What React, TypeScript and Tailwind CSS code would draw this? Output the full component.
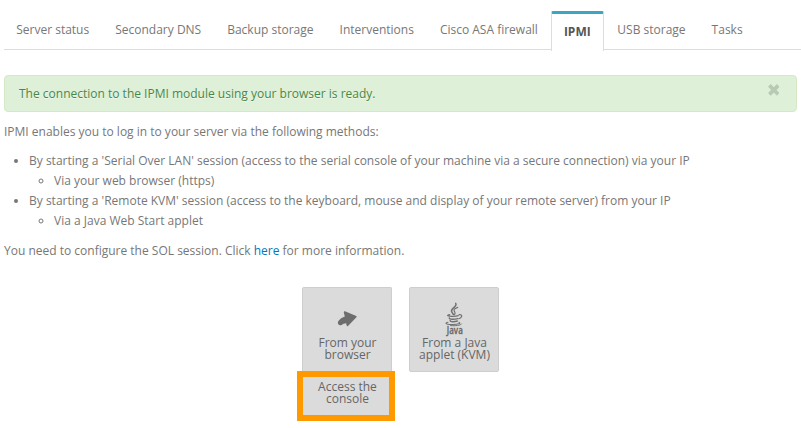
import React from "react";

const tabs = [
  "Server status",
  "Secondary DNS",
  "Backup storage",
  "Interventions",
  "Cisco ASA firewall",
  "IPMI",
  "USB storage",
  "Tasks",
];

function Tabs() {
  return (
    <nav className="flex h-[39px] items-end border-b border-[#dddddd]">
      {tabs.map((tab, index) =>
        tab === "IPMI" ? (
          <a
            key={tab}
            className="-mb-[2px] h-[40px] rounded-t-[2px] border-x border-t-[3px] border-x-[#dddddd] border-t-[#39a7c1] bg-white pl-3 pr-[12.7px] pt-[8px] font-bold leading-5 text-[#555555]"
          >
            {tab}
          </a>
        ) : (
          <a
            key={tab}
            className={
              index === 0
                ? "h-[29px] whitespace-nowrap pl-[12.2px] pr-[13px] leading-5"
                : "h-[29px] whitespace-nowrap px-[13px] leading-5"
            }
          >
            {tab}
          </a>
        ),
      )}
    </nav>
  );
}

function Alert() {
  return (
    <div className="mt-[25px] flex h-[37px] justify-between rounded-[4px] border border-[#d6e9c6] bg-[#dff0d8] pl-[14px] pr-[17px] text-[#468847]">
      <p className="pt-[8px] leading-5 [text-shadow:0_1px_0_rgba(255,255,255,0.5)]">
        The connection to the IPMI module using your browser is ready.
      </p>
      <svg className="mt-[8px] h-[12px] w-[11px]" viewBox="0 0 11 12" fill="none">
        <path d="M2.7 2.8 L8.9 9 M8.9 2.8 L2.7 9" stroke="#b9c9b3" strokeWidth="3.8" strokeLinecap="square" strokeLinejoin="round" />
      </svg>
    </div>
  );
}

function ArrowIcon() {
  return (
    <svg className="h-[17px] w-[20px]" viewBox="0 0 20 17" fill="#6d6d6d">
      <path d="M8 1.2 L19.3 5.9 Q20 6.5 19.4 7.2 L11 16 Q9.9 16.6 9.6 15.3 L9.1 13.3 Q6.4 13.4 4.6 15 Q2.4 15.9 1.1 14 Q.4 12.4 1.4 11 Q3.6 8 7.8 6.6 L6.8 2.4 Q6.8 .9 8 1.2 Z" />
    </svg>
  );
}

function JavaIcon() {
  return (
    <svg className="h-[35px] w-[20px]" viewBox="0 0 20 35" fill="none" stroke="#727272" strokeLinecap="round">
      <path d="M10.7 1.3 C12.9 4.7 4.8 6.4 6.7 9.8 C7.1 10.8 8 11.8 8.5 12.5" strokeWidth="1.5" />
      <path d="M12.7 5.4 C8.3 6.9 8.5 8.3 9.8 10 C10.4 11 10.1 11.8 9.5 12.6" strokeWidth="1.2" />
      <path d="M4.7 12.7 C1.1 13.4 2.2 14.4 7.8 14.3 Q11.5 14.3 13.3 13.6" strokeWidth="1.2" />
      <path d="M14.1 12.7 C18 12.3 17.3 15.5 13.9 16.7" strokeWidth="1.2" />
      <path d="M4.3 16 C4.1 17.5 9 17.5 12.8 16.6" strokeWidth="1.4" />
      <path d="M5.2 18.5 C5 20 9.2 20 12.3 19" strokeWidth="1.4" />
      <path d="M2.9 20.2 C-1.9 21.6 3.5 22.6 8 22.5 C13 22.5 16.5 21.5 13.9 20.3" strokeWidth="1.1" />
      <path d="M5.5 23.6 C10.5 24 15.7 23.5 16.5 22" strokeWidth="1" />
      <text x="1.8" y="32" fontSize="10" textLength="16" lengthAdjust="spacingAndGlyphs" fill="#686868" stroke="#686868" strokeWidth=".3" className="font-['Open_Sans',sans-serif] text-[10px] font-semibold">
        Java
      </text>
    </svg>
  );
}

export default function App() {
  return (
    <main className="h-[428px] w-[801px] overflow-hidden bg-white pl-1 pr-[4px] pt-[11px] font-['Open_Sans',sans-serif] text-[12px] leading-5 text-[#777777]">
      <div className="-mr-1">
        <Tabs />
      </div>
      <Alert />
      <p className="mt-[10px]">IPMI enables you to log in to your server via the following methods:</p>
      <ul className="mt-[9px] list-disc pl-[25px]">
        <li>
          By starting a 'Serial Over LAN' session (access to the serial console of your machine via a secure connection) via your IP
          <ul className="list-[circle] pl-[25px]">
            <li>Via your web browser (https)</li>
          </ul>
        </li>
        <li>
          By starting a 'Remote KVM' session (access to the keyboard, mouse and display of your remote server) from your IP
          <ul className="list-[circle] pl-[25px]">
            <li>Via a Java Web Start applet</li>
          </ul>
        </li>
      </ul>
      <p className="mt-[10px]">
        You need to configure the SOL session. Click <a className="text-[#0078bd]">here</a> for more information.
      </p>
      <div className="ml-[293px] mt-[26px] flex items-start gap-[14px] text-center leading-3 text-[#666666] [text-shadow:0_1px_0_rgba(255,255,255,0.5)]">
        <div className="flex w-[98px] flex-col">
          <button className="ml-[5px] flex h-[84px] w-[90px] flex-col items-center rounded-t-[2px] border border-b-0 border-[#cecece] bg-[#dbdbdb] pt-[22px]">
            <ArrowIcon />
            <span className="mt-[10px] pl-px">From your<br />browser</span>
          </button>
          <button className="flex h-[50px] w-[98px] justify-center border-[6px] border-[#ff9900] bg-[#dbdbdb] pl-[3px] pt-[4px]">
            <span>Access the<br />console</span>
          </button>
        </div>
        <button className="flex h-[85px] w-[90px] flex-col items-center rounded-[2px] border border-[#cecece] bg-[#dbdbdb] pl-px pt-[14px]">
          <JavaIcon />
          <span>From a Java<br />applet (KVM)</span>
        </button>
      </div>
    </main>
  );
}
